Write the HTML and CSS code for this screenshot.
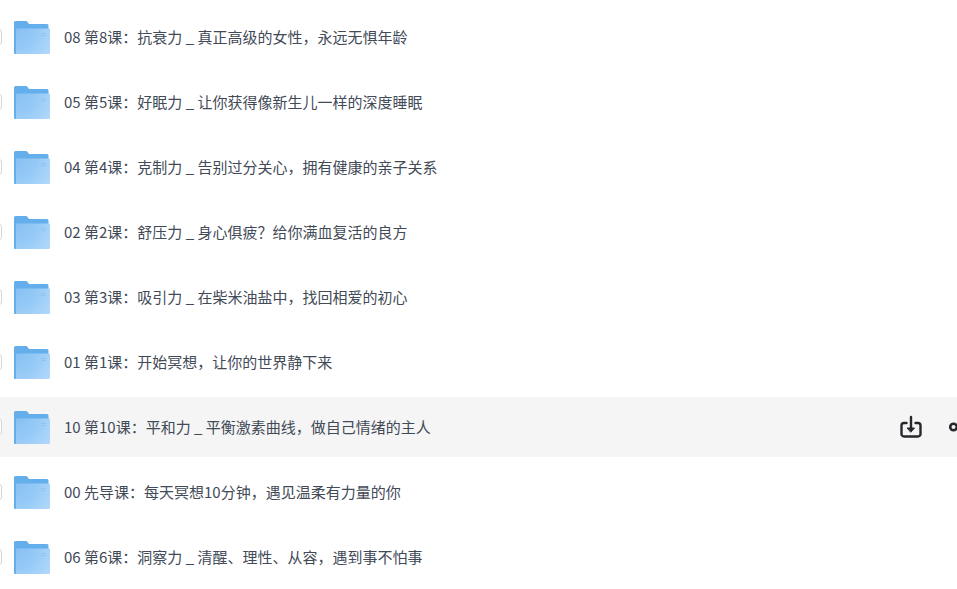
FILE: index.html
```html
<!DOCTYPE html>
<html lang="zh-CN">
<head>
  <meta charset="UTF-8" />
  <title>文件列表</title>
  <link rel="stylesheet" href="styles.css">
</head>
<body>
  <svg class="defs" width="0" height="0" aria-hidden="true">
    <defs>
      <radialGradient id="folderFront" gradientUnits="userSpaceOnUse" cx="2" cy="7" r="42">
        <stop offset="0" stop-color="#86c0f3"/>
        <stop offset="0.5" stop-color="#95caf6"/>
        <stop offset="1" stop-color="#b2d8fb"/>
      </radialGradient>
      <symbol id="folder" viewBox="0 0 36 33">
        <path d="M0 1.500A1.500 1.500 0 0 1 1.500 0h10.500a1.500 1.500 0 0 1 1.200.6L15 3h18a1.500 1.500 0 0 1 1.500 1.500V10H2V33H1A1 1 0 0 1 0 32z" fill="#64aeeb"/>
        <path d="M2 7.500H35a1 1 0 0 1 1 1V32a1 1 0 0 1-1 1H2z" fill="url(#folderFront)"/>
        <path d="M27 12.500h5M27 14.500h5" stroke="#8fc4f2" stroke-width="0.9" fill="none"/>
      </symbol>
    </defs>
  </svg>

  <ul class="file-list">
    <li class="row">
      <span class="check"></span>
      <svg class="folder"><use href="#folder"/></svg>
      <span class="name">08 第8课&#xFF1A;抗衰力 _ 真正高级的女性&#xFF0C;永远无惧年龄</span>
    </li>
    <li class="row">
      <span class="check"></span>
      <svg class="folder"><use href="#folder"/></svg>
      <span class="name">05 第5课&#xFF1A;好眠力 _ 让你获得像新生儿一样的深度睡眠</span>
    </li>
    <li class="row">
      <span class="check"></span>
      <svg class="folder"><use href="#folder"/></svg>
      <span class="name">04 第4课&#xFF1A;克制力 _ 告别过分关心&#xFF0C;拥有健康的亲子关系</span>
    </li>
    <li class="row">
      <span class="check"></span>
      <svg class="folder"><use href="#folder"/></svg>
      <span class="name">02 第2课&#xFF1A;舒压力 _ 身心俱疲&#xFF1F;给你满血复活的良方</span>
    </li>
    <li class="row">
      <span class="check"></span>
      <svg class="folder"><use href="#folder"/></svg>
      <span class="name">03 第3课&#xFF1A;吸引力 _ 在柴米油盐中&#xFF0C;找回相爱的初心</span>
    </li>
    <li class="row">
      <span class="check"></span>
      <svg class="folder"><use href="#folder"/></svg>
      <span class="name">01 第1课&#xFF1A;开始冥想&#xFF0C;让你的世界静下来</span>
    </li>
    <li class="row row-hover">
      <span class="check"></span>
      <svg class="folder"><use href="#folder"/></svg>
      <span class="name">10 第10课&#xFF1A;平和力 _ 平衡激素曲线&#xFF0C;做自己情绪的主人</span>
      <div class="actions">
        <svg class="act-icon" viewBox="0 0 24 24" fill="none" stroke="#26282c" stroke-width="2.400" stroke-linecap="round" stroke-linejoin="round">
          <path d="M7.500 8H5a2.500 2.500 0 0 0-2.500 2.500v8.500A2.500 2.500 0 0 0 5 21.500h14a2.500 2.500 0 0 0 2.500-2.500v-8.500A2.500 2.500 0 0 0 19 8h-2.500"/>
          <path d="M12 2v12"/>
          <path d="M8.500 13h7L12 17z" fill="#26282c" stroke-width="1"/>
        </svg>
        <svg class="act-icon" viewBox="0 0 24 24" fill="none" stroke="#26282c" stroke-width="2.600">
          <circle cx="6.500" cy="12" r="3.300"/>
          <path d="M10.500 9.500 18 5M10.500 14.500 18 19"/>
        </svg>
      </div>
    </li>
    <li class="row">
      <span class="check"></span>
      <svg class="folder"><use href="#folder"/></svg>
      <span class="name">00 先导课&#xFF1A;每天冥想10分钟&#xFF0C;遇见温柔有力量的你</span>
    </li>
    <li class="row">
      <span class="check"></span>
      <svg class="folder"><use href="#folder"/></svg>
      <span class="name">06 第6课&#xFF1A;洞察力 _ 清醒、理性、从容&#xFF0C;遇到事不怕事</span>
    </li>
  </ul>
</body>
</html>
```

FILE: styles.css
```css
* {
  box-sizing: border-box;
}

html, body {
  height: 100%;
}

body {
  margin: 0;
  background: #fff;
  font-family: "Noto Sans CJK SC", "Noto Sans", sans-serif;
  color: #424a57;
  overflow: hidden;
}

.defs {
  display: block;
  height: 0;
}

.file-list {
  list-style: none;
  margin: 0;
  padding: 7px 0 0;
  display: flex;
  flex-direction: column;
  gap: 5px;
}

.row {
  height: 60px;
  flex: none;
  display: flex;
  align-items: center;
  overflow: hidden;
}

.row-hover {
  background: #f5f5f5;
}

.check {
  width: 16px;
  height: 16px;
  flex: none;
  margin-left: -14px;
  border: 1px solid #d5d7db;
  border-radius: 3px;
  background: #fff;
}

.folder {
  width: 36px;
  height: 33px;
  flex: none;
  margin-left: 12px;
}

.name {
  margin-left: 14px;
  font-size: 15px;
  line-height: 20px;
  white-space: nowrap;
}

.actions {
  margin-left: auto;
  margin-right: -14px;
  display: flex;
  align-items: center;
  gap: 24px;
}

.act-icon {
  width: 24px;
  height: 24px;
  flex: none;
}
```
